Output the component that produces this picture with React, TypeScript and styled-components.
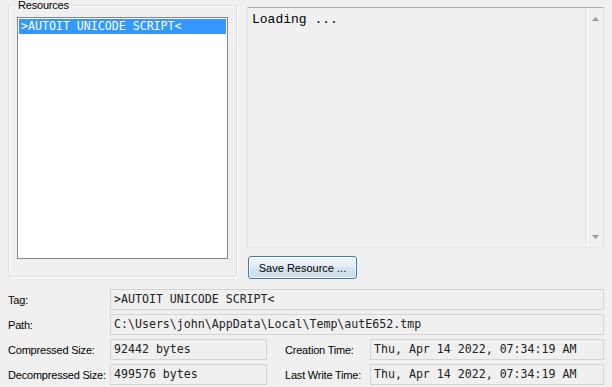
import styled, { createGlobalStyle } from 'styled-components';

const GlobalStyle = createGlobalStyle`
  html, body {
    margin: 0;
    padding: 0;
    background: #f0f0f0;
  }
  body {
    font-family: 'Liberation Sans', Arial, sans-serif;
    font-size: 11px;
    color: #000;
  }
`;

const MONO = "'DejaVu Sans Mono', 'Liberation Mono', monospace";

function Arrow({ up }: { up?: boolean }) {
  return (
    <svg width="7" height="4" viewBox="0 0 7 4">
      <polygon points={up ? '3.5,0 7,4 0,4' : '0,0 7,0 3.5,4'} fill="#9a9a9a" />
    </svg>
  );
}

export default function App() {
  return (
    <Page>
      <GlobalStyle />
      <TopRow>
        <GroupBox>
          <Legend>Resources</Legend>
          <ListBox>
            <ListItem selected>&gt;AUTOIT UNICODE SCRIPT&lt;</ListItem>
          </ListBox>
        </GroupBox>
        <RightColumn>
          <TextPane>
            <PaneText>Loading ...</PaneText>
            <ScrollBar>
              <Arrow up />
              <Arrow />
            </ScrollBar>
          </TextPane>
          <Button>Save Resource ...</Button>
        </RightColumn>
      </TopRow>
      <Form>
        <Label>Tag:</Label>
        <Field wide>&gt;AUTOIT UNICODE SCRIPT&lt;</Field>
        <Label>Path:</Label>
        <Field wide>C:\Users\john\AppData\Local\Temp\autE652.tmp</Field>
        <Label>Compressed Size:</Label>
        <Field>92442 bytes</Field>
        <Label indent>Creation Time:</Label>
        <Field>Thu, Apr 14 2022, 07:34:19 AM</Field>
        <Label>Decompressed Size:</Label>
        <Field>499576 bytes</Field>
        <Label indent>Last Write Time:</Label>
        <Field>Thu, Apr 14 2022, 07:34:19 AM</Field>
      </Form>
    </Page>
  );
}

const Page = styled.div`
  width: 612px;
  height: 387px;
  box-sizing: border-box;
  padding: 0 8px;
  overflow: hidden;
`;

const TopRow = styled.div`
  display: flex;
  gap: 10px;
`;

const GroupBox = styled.div`
  position: relative;
  width: 229px;
  height: 272px;
  margin-top: 5px;
  box-sizing: border-box;
  border: 1px solid #d5dfe5;
  border-radius: 3px;
  box-shadow: inset 1px 1px 0 #fff, 1px 1px 0 #fff;
  padding: 11px 8px 0 8px;
`;

const Legend = styled.span`
  position: absolute;
  top: -7px;
  left: 7px;
  padding: 0 2px;
  background: #f0f0f0;
  line-height: 12px;
  letter-spacing: -0.2px;
`;

const ListBox = styled.div`
  height: 242px;
  box-sizing: border-box;
  border: 1px solid #828790;
  background: #fff;
  padding: 1px;
`;

const ListItem = styled.div<{ selected?: boolean }>`
  height: 15px;
  line-height: 15px;
  padding-left: 2px;
  font-family: ${MONO};
  font-size: 11.6px;
  background: ${(p) => (p.selected ? '#3399ff' : 'transparent')};
  color: ${(p) => (p.selected ? '#fff' : '#000')};
`;

const RightColumn = styled.div`
  flex: 1;
  display: flex;
  flex-direction: column;
  align-items: flex-start;
  padding-top: 7px;
`;

const TextPane = styled.div`
  align-self: stretch;
  height: 241px;
  box-sizing: border-box;
  display: flex;
  border: 1px solid;
  border-color: #abadb3 #dbdfe6 #e3e9ef #e2e3ea;
  background: #f0f0f0;
`;

const PaneText = styled.div`
  flex: 1;
  padding: 4px 0 0 4px;
  font-family: 'Liberation Mono', 'Courier New', monospace;
  font-size: 13px;
  line-height: 15px;
  color: #000;
`;

const ScrollBar = styled.div`
  width: 15px;
  display: flex;
  flex-direction: column;
  justify-content: space-between;
  align-items: center;
  padding: 9px 0 8px;
  border-left: 1px solid #fff;
  box-shadow: -1px 0 0 #e6e6e6;
`;

const Button = styled.button`
  margin: 8px 0 0 1px;
  width: 109px;
  height: 23px;
  padding: 0;
  border: 1px solid #3c7fb1;
  border-radius: 3px;
  background: linear-gradient(#eef5fb 0%, #e2edf6 48%, #d3e3f0 52%, #cbdcea 100%);
  box-shadow: inset 0 0 0 1px rgba(255, 255, 255, 0.7);
  font-family: 'Liberation Sans', Arial, sans-serif;
  font-size: 11px;
  color: #000;
`;

const Form = styled.div`
  margin-top: 10px;
  display: grid;
  grid-template-columns: 102px 157px 103px 1fr;
  grid-auto-rows: 21px;
  row-gap: 4px;
`;

const Label = styled.div<{ indent?: boolean }>`
  display: flex;
  align-items: center;
  padding-left: ${(p) => (p.indent ? '18px' : '0')};
  letter-spacing: -0.2px;
  white-space: nowrap;
`;

const Field = styled.div<{ wide?: boolean }>`
  grid-column: ${(p) => (p.wide ? '2 / -1' : 'auto')};
  display: flex;
  align-items: center;
  box-sizing: border-box;
  padding: 0 0 2px 3px;
  border: 1px solid #d4d4d4;
  background: #f0f0f0;
  font-family: ${MONO};
  font-size: 11.6px;
  color: #222;
  white-space: nowrap;
  overflow: hidden;
`;
